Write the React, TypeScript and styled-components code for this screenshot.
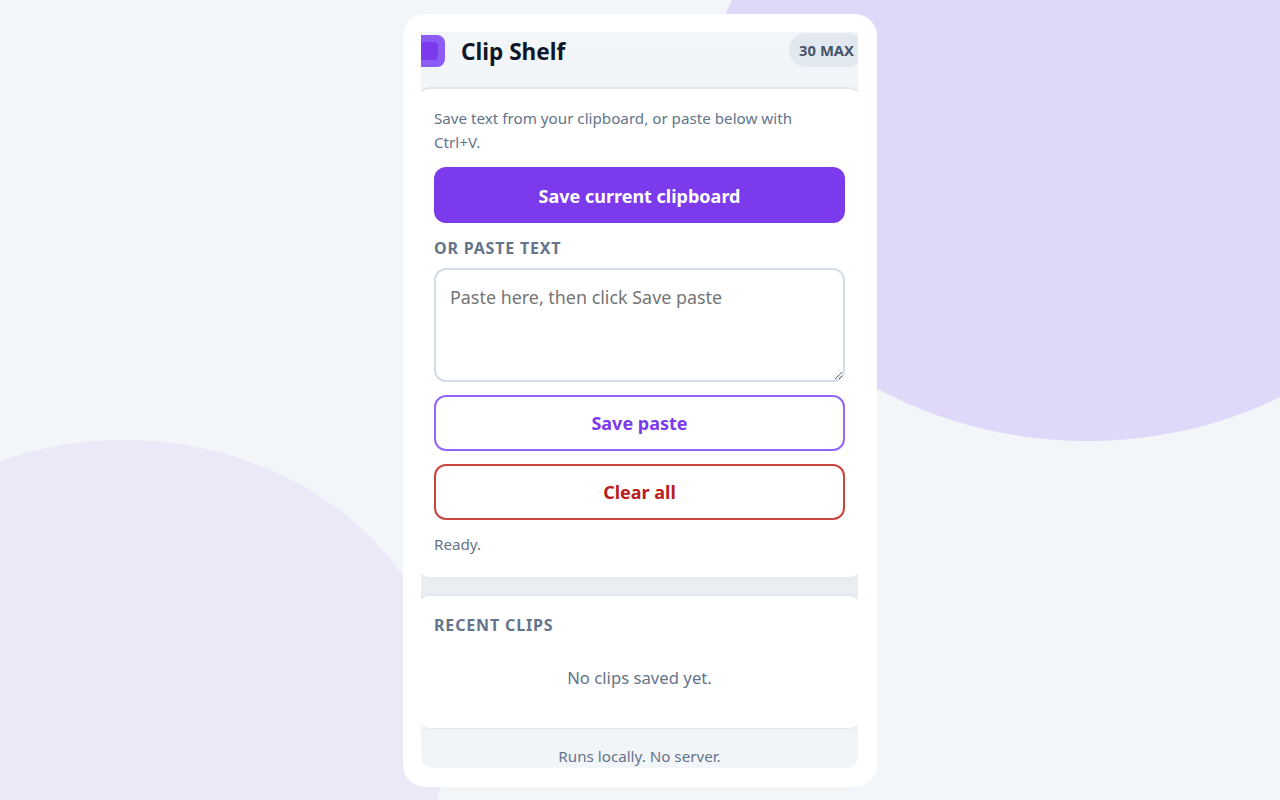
import styled, { createGlobalStyle } from "styled-components";

const GlobalStyle = createGlobalStyle`
  * {
    box-sizing: border-box;
  }

  html,
  body {
    margin: 0;
    height: 100%;
  }

  body {
    background: #f2f6f9;
    font-family: "Noto Sans", "Open Sans", sans-serif;
    overflow: hidden;
  }
`;

const App = () => {
  return (
    <Page>
      <GlobalStyle />
      <BlobTop />
      <BlobBottom />
      <Card>
        <Frame>
          <Header>
            <Brand>
              <Logo>
                <LogoInner />
              </Logo>
              <Title>Clip Shelf</Title>
            </Brand>
            <Badge>30 MAX</Badge>
          </Header>
          <Section>
            <Hint>Save text from your clipboard, or paste below with Ctrl+V.</Hint>
            <PrimaryButton>Save current clipboard</PrimaryButton>
            <Label htmlFor="paste">OR PASTE TEXT</Label>
            <PasteArea id="paste" placeholder="Paste here, then click Save paste" />
            <OutlineButton $color="#7c3aed" $border="#9466f7">
              Save paste
            </OutlineButton>
            <OutlineButton $color="#b91c1c" $border="#c8453e">
              Clear all
            </OutlineButton>
            <Status>Ready.</Status>
          </Section>
          <RecentSection>
            <RecentTitle>RECENT CLIPS</RecentTitle>
            <Empty>No clips saved yet.</Empty>
          </RecentSection>
          <Footer>Runs locally. No server.</Footer>
        </Frame>
      </Card>
    </Page>
  );
};
export default App;

const Page = styled.main`
  position: relative;
  width: 100%;
  height: 800px;
  overflow: hidden;
  padding-top: 14px;
  display: flex;
  justify-content: center;
`;

const BlobTop = styled.div`
  position: absolute;
  left: 704px;
  top: -201px;
  width: 766px;
  height: 642px;
  border-radius: 50%;
  background: #e0d8f8;
`;

const BlobBottom = styled.div`
  position: absolute;
  left: -202px;
  top: 440px;
  width: 652px;
  height: 562px;
  border-radius: 50%;
  background: #ebe9f8;
`;

const Card = styled.div`
  position: relative;
  width: 474px;
  height: 773px;
  padding: 18px 19px 18px 18px;
  background: #ffffff;
  border-radius: 22px;
`;

const Frame = styled.div`
  height: 736px;
  overflow: hidden;
  border-radius: 0 0 12px 12px;
  background: linear-gradient(180deg, #f2f6f9 0%, #e9edf2 75%, #f2f6f9 100%);
`;

const Header = styled.header`
  display: flex;
  align-items: center;
  justify-content: space-between;
  margin: 0 -6px 0 -8px;
  height: 55px;
  padding-top: 1px;
  padding-bottom: 19px;
`;

const Brand = styled.div`
  display: flex;
  align-items: center;
  gap: 16px;
`;

const Logo = styled.div`
  width: 32px;
  height: 32px;
  border-radius: 8px;
  background: #8b5cf6;
  display: flex;
  align-items: center;
  justify-content: center;
`;

const LogoInner = styled.div`
  width: 18px;
  height: 18px;
  border-radius: 4px;
  background: #7c3aed;
`;

const Title = styled.h1`
  margin: 2px 0 0;
  font-size: 22.6px;
  line-height: 30px;
  font-weight: 700;
  color: #0f172a;
`;

const Badge = styled.span`
  height: 34px;
  margin-bottom: 2px;
  padding: 0 10px;
  display: flex;
  align-items: center;
  border-radius: 17px;
  background: #e2e8f0;
  color: #475569;
  font-size: 14.8px;
  font-weight: 700;
`;

const Section = styled.section`
  display: flex;
  flex-direction: column;
  margin: 0 -3px;
  padding: 17px 16px 0;
  height: 491px;
  background: #ffffff;
  border-radius: 12px;
  border-top: 2px solid #e2e8f0;
  border-bottom: 1px solid #e2e8f0;
`;

const Hint = styled.p`
  margin: 0;
  max-width: 375px;
  font-size: 15.2px;
  line-height: 24px;
  color: #64748b;
`;

const PrimaryButton = styled.button`
  margin-top: 13px;
  height: 56px;
  flex-shrink: 0;
  padding-top: 3px;
  border: none;
  border-radius: 12px;
  background: #7c3aed;
  color: #ffffff;
  font-family: inherit;
  font-size: 18px;
  font-weight: 700;
`;

const Label = styled.label`
  margin-top: 14px;
  font-size: 16px;
  line-height: 22px;
  font-weight: 700;
  letter-spacing: 0.8px;
  color: #64748b;
`;

const PasteArea = styled.textarea`
  margin-top: 9px;
  height: 114px;
  flex-shrink: 0;
  padding: 14.5px 14px;
  border: 2px solid #d3dce7;
  border-radius: 12px;
  background: #ffffff;
  font-family: inherit;
  font-size: 17.9px;
  line-height: 24px;
  color: #334155;
  resize: vertical;
`;

const OutlineButton = styled.button<{ $color: string; $border: string }>`
  margin-top: 13px;
  height: 56px;
  flex-shrink: 0;
  border: 2px solid ${({ $border }) => $border};
  border-radius: 12px;
  background: #ffffff;
  color: ${({ $color }) => $color};
  font-family: inherit;
  font-size: 18px;
  font-weight: 700;
`;

const Status = styled.p`
  margin: 13px 0 0;
  font-size: 15.2px;
  line-height: 22px;
  color: #64748b;
`;

const RecentSection = styled.section`
  margin: 16px -3px 0;
  padding: 18px 16px 0;
  height: 135px;
  background: #ffffff;
  border-radius: 12px;
  border-top: 2px solid #e2e8f0;
  border-bottom: 1px solid #e2e8f0;
`;

const RecentTitle = styled.h2`
  margin: 0;
  font-size: 16px;
  line-height: 22px;
  font-weight: 700;
  letter-spacing: 0.85px;
  color: #64748b;
`;

const Empty = styled.p`
  margin: 30px 0 0;
  text-align: center;
  font-size: 16.7px;
  line-height: 24px;
  color: #64748b;
`;

const Footer = styled.footer`
  margin-top: 16px;
  text-align: center;
  font-size: 15.2px;
  line-height: 22px;
  color: #64748b;
`;
